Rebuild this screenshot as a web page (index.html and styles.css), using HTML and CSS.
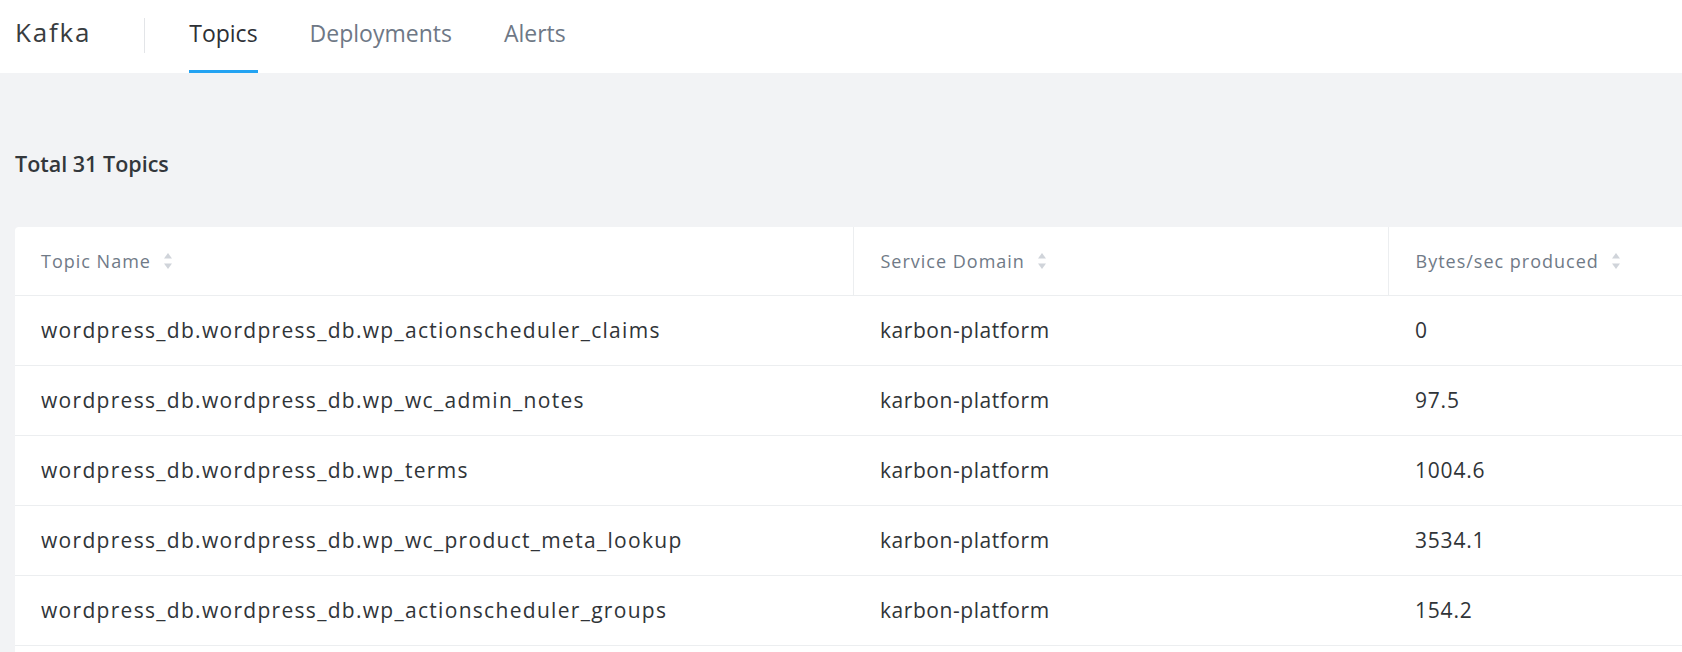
FILE: index.html
```html
<!DOCTYPE html>
<html>
<head>
<meta charset="utf-8">
<link rel="stylesheet" href="styles.css">
</head>
<body>
<header class="topbar">
  <div class="brand">Kafka</div>
  <div class="sep"></div>
  <nav class="tabs">
    <a class="tab active">Topics</a>
    <a class="tab">Deployments</a>
    <a class="tab">Alerts</a>
  </nav>
</header>
<main class="content">
  <h2 class="total">Total 31 Topics</h2>
  <div class="card">
    <table class="grid">
      <colgroup>
        <col class="c1"><col class="c2"><col class="c3"><col class="c4">
      </colgroup>
      <thead>
        <tr>
          <th><span class="th-in">Topic Name <svg class="sort" viewBox="0 0 8 16" width="8" height="16"><path d="M4 0 L8 5.5 L0 5.5 Z"/><path d="M4 16 L8 10.5 L0 10.5 Z"/></svg></span></th>
          <th><span class="th-in">Service Domain <svg class="sort" viewBox="0 0 8 16" width="8" height="16"><path d="M4 0 L8 5.5 L0 5.5 Z"/><path d="M4 16 L8 10.5 L0 10.5 Z"/></svg></span></th>
          <th><span class="th-in">Bytes/sec produced <svg class="sort" viewBox="0 0 8 16" width="8" height="16"><path d="M4 0 L8 5.5 L0 5.5 Z"/><path d="M4 16 L8 10.5 L0 10.5 Z"/></svg></span></th>
          <th></th>
        </tr>
      </thead>
      <tbody>
        <tr><td class="name">wordpress_db.wordpress_db.wp_actionscheduler_claims</td><td class="domain">karbon-platform</td><td class="num">0</td><td></td></tr>
        <tr><td class="name">wordpress_db.wordpress_db.wp_wc_admin_notes</td><td class="domain">karbon-platform</td><td class="num">97.5</td><td></td></tr>
        <tr><td class="name">wordpress_db.wordpress_db.wp_terms</td><td class="domain">karbon-platform</td><td class="num">1004.6</td><td></td></tr>
        <tr><td class="name">wordpress_db.wordpress_db.wp_wc_product_meta_lookup</td><td class="domain">karbon-platform</td><td class="num">3534.1</td><td></td></tr>
        <tr><td class="name">wordpress_db.wordpress_db.wp_actionscheduler_groups</td><td class="domain">karbon-platform</td><td class="num">154.2</td><td></td></tr>
        <tr class="filler"><td></td><td></td><td></td><td></td></tr>
      </tbody>
    </table>
  </div>
</main>
</body>
</html>
```
FILE: styles.css
```css
* { box-sizing: border-box; }
html, body { margin: 0; padding: 0; height: 100%; overflow: hidden; }
body {
  background: #f2f3f5;
  font-family: "Open Sans", "Liberation Sans", sans-serif;
  color: #2f3337;
}
.topbar {
  height: 73px;
  background: #fff;
  display: flex;
  align-items: stretch;
  padding-left: 15px;
}
.brand {
  font-size: 26px;
  line-height: 30px;
  padding-top: 17px;
  color: #383c40;
  letter-spacing: 1.8px;
}
.sep {
  width: 1px;
  background: #e3e5e8;
  margin: 18px 44px 20px 53px;
}
.tabs { display: flex; gap: 52px; }
.tab {
  font-size: 23px;
  line-height: 30px;
  padding-top: 18px;
  color: #6e7886;
  border-bottom: 3px solid transparent;
}
.tab.active { color: #2d3035; border-bottom-color: #23a3f2; }
.content { padding: 0 0 0 15px; }
.total {
  margin: 0;
  padding: 76px 0 0 0;
  height: 154px;
  font-size: 21.5px;
  line-height: 30px;
  font-weight: 600;
  color: #33373b;
}
.card {
  background: #fff;
  border-radius: 4px 0 0 0;
  width: 1900px;
  height: 600px;
  overflow: hidden;
}
.grid { border-collapse: collapse; table-layout: fixed; width: 100%; }
.c1 { width: 838px; }
.c2 { width: 535px; }
.c3 { width: 400px; }
th {
  height: 68px;
  text-align: left;
  font-weight: 400;
  font-size: 18px;
  color: #707a87;
  padding: 0 0 0 27px;
  border-bottom: 1px solid #eceef0;
  border-left: 1px solid #eceef0;
  letter-spacing: 1px;
}
th:first-child { border-left: none; padding-left: 26px; }
.th-in { display: inline-flex; align-items: center; gap: 13px; }
.sort { fill: #d0d4da; }
td {
  height: 70px;
  font-size: 21px;
  color: #303438;
  padding: 0 0 0 27px;
  border-bottom: 1px solid #eceef0;
  white-space: nowrap;
}
td:first-child { padding-left: 26px; }
td.name { letter-spacing: 1.3px; }
td.domain { letter-spacing: 0.55px; }
td.num { letter-spacing: 0.8px; }
.filler td { height: 70px; }
```
